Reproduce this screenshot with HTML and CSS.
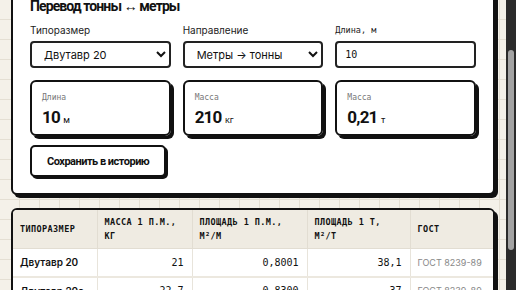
FILE: index.html
```html
<!DOCTYPE html>
<html lang="ru">
<head>
    <meta charset="UTF-8">
    <meta name="viewport" content="width=device-width, initial-scale=1.0">
    <title>Перевод тонны ↔ метры</title>
    <link rel="stylesheet" href="styles.css">
</head>
<body>
    <div class="page">
        <section class="card converter">
            <h2>Перевод тонны ↔ метры</h2>
            <div class="fields">
                <div class="field">
                    <label for="size">Типоразмер</label>
                    <select id="size">
                        <option>Двутавр 20</option>
                        <option>Двутавр 20а</option>
                        <option>Двутавр 22</option>
                    </select>
                </div>
                <div class="field">
                    <label for="direction">Направление</label>
                    <select id="direction">
                        <option>Метры → тонны</option>
                        <option>Тонны → метры</option>
                    </select>
                </div>
                <div class="field">
                    <label for="length" class="mono">Длина, м</label>
                    <input type="text" id="length" value="10">
                </div>
            </div>
            <div class="stats">
                <div class="stat">
                    <span class="stat-label">Длина</span>
                    <span class="stat-value">10 <small>м</small></span>
                </div>
                <div class="stat">
                    <span class="stat-label">Масса</span>
                    <span class="stat-value">210 <small>кг</small></span>
                </div>
                <div class="stat">
                    <span class="stat-label">Масса</span>
                    <span class="stat-value">0,21 <small>т</small></span>
                </div>
            </div>
            <button type="button">Сохранить в историю</button>
        </section>

        <section class="card table-card">
            <table>
                <colgroup>
                    <col class="c-name">
                    <col class="c-mass">
                    <col class="c-area">
                    <col class="c-area-t">
                    <col class="c-gost">
                </colgroup>
                <thead>
                    <tr>
                        <th>Типоразмер</th>
                        <th>Масса 1 п.м., кг</th>
                        <th>Площадь 1 п.м., м²/м</th>
                        <th>Площадь 1 т, м²/т</th>
                        <th>ГОСТ</th>
                    </tr>
                </thead>
                <tbody>
                    <tr>
                        <td class="name">Двутавр 20</td>
                        <td class="num">21</td>
                        <td class="num">0,8001</td>
                        <td class="num">38,1</td>
                        <td class="gost">ГОСТ 8239-89</td>
                    </tr>
                    <tr>
                        <td class="name">Двутавр 20а</td>
                        <td class="num">22,7</td>
                        <td class="num">0,8300</td>
                        <td class="num">37</td>
                        <td class="gost">ГОСТ 8239-89</td>
                    </tr>
                    <tr>
                        <td class="name">Двутавр 22</td>
                        <td class="num">24</td>
                        <td class="num">0,8750</td>
                        <td class="num">36,5</td>
                        <td class="gost">ГОСТ 8239-89</td>
                    </tr>
                </tbody>
            </table>
        </section>
    </div>

    <!-- полоса прокрутки страницы -->
    <div class="scrollbar"><div class="thumb"></div></div>

    <script src="script.js"></script>
</body>
</html>
```

FILE: styles.css
```css
* {
    margin: 0;
    padding: 0;
    box-sizing: border-box;
}

html {
    background-color: #f4f1e9;
    background-image:
        linear-gradient(#e4dfd3 1px, transparent 1px),
        linear-gradient(90deg, #e4dfd3 1px, transparent 1px);
    background-size: 20px 20px;
    background-position: -1px 11px;
}

body {
    font-family: Inter, 'Noto Sans', sans-serif;
    color: #111;
}

.page {
    padding: 54px 21px 12px 11px;
}

.scrollbar {
    position: fixed;
    top: 0;
    right: 0;
    width: 10px;
    height: 100%;
    background: #2b2b2b;
    padding: 50px 2px 0;
}

.thumb {
    height: 200px;
    background: #a3a3a3;
    border-radius: 3px;
}

.card {
    background: #fff;
    border: 2px solid #111;
    border-radius: 6px;
    box-shadow: 3px 3px 0 #111;
}

.converter {
    padding: 12px 17px 16px;
    margin-bottom: 13px;
}

h2,
.stat-value,
button {
    font-family: Roboto, 'Noto Sans', sans-serif;
    font-weight: 700;
}

h2 {
    font-size: 14px;
    letter-spacing: -0.9px;
    line-height: 20px;
    margin-bottom: 8px;
}

.fields {
    display: grid;
    grid-template-columns: repeat(3, 1fr);
    gap: 12px;
    margin-bottom: 12px;
}

.field label {
    display: block;
    font-size: 10px;
    line-height: 13px;
    color: #222;
    margin-bottom: 4px;
}

.field label.mono {
    font-family: 'DejaVu Sans Mono', monospace;
    font-size: 8.5px;
}

select,
input {
    width: 100%;
    height: 27px;
    border: 2px solid #222;
    border-radius: 4px;
    background: #fff;
    color: #111;
    padding: 0 8px;
    font-size: 11px;
    font-family: Inter, sans-serif;
}

input {
    font-family: 'DejaVu Sans Mono', monospace;
    font-size: 10px;
}

.stats {
    display: grid;
    grid-template-columns: repeat(3, 1fr);
    gap: 12px;
    margin-bottom: 9px;
}

.stat {
    height: 56px;
    border: 2px solid #111;
    border-radius: 6px;
    box-shadow: 3px 3px 0 #111;
    padding: 10px 10px 0;
    display: flex;
    flex-direction: column;
    gap: 3px;
}

.stat-label {
    font-family: 'DejaVu Sans Mono', monospace;
    font-size: 8px;
    line-height: 11px;
    color: #777;
}

.stat-value {
    font-size: 17px;
    letter-spacing: -0.8px;
    line-height: 22px;
}

.stat-value small {
    font-size: 9px;
    font-weight: 400;
    letter-spacing: 0;
}

button {
    height: 32px;
    padding: 0 15px;
    background: #fff;
    border: 2px solid #111;
    border-radius: 5px;
    box-shadow: 2px 2px 0 #111;
    font-size: 11px;
    letter-spacing: -0.5px;
    color: #111;
    cursor: pointer;
}

.table-card {
    overflow: hidden;
}

table {
    width: 100%;
    border-collapse: collapse;
    table-layout: fixed;
}

.c-name { width: 84px; }
.c-mass { width: 95px; }
.c-area { width: 115px; }
.c-area-t { width: 103px; }
.c-gost { width: 83px; }

th {
    background: #efebe2;
    text-align: left;
    font-family: 'DejaVu Sans Mono', monospace;
    font-size: 8.5px;
    letter-spacing: 0.4px;
    line-height: 14px;
    font-weight: 700;
    text-transform: uppercase;
    padding: 5px 7px;
    height: 38px;
    border-left: 1px solid #e2ddd2;
    border-bottom: 1px solid #e2ddd2;
}

th:first-child,
td:first-child {
    border-left: none;
}

td {
    height: 28px;
    padding: 0 7px;
    border-left: 1px solid #e8e4db;
    border-bottom: 2px solid #ece8df;
    white-space: nowrap;
}

td.name {
    font-weight: 600;
    font-size: 10px;
}

td.num {
    text-align: right;
    padding-right: 8px;
    font-family: 'DejaVu Sans Mono', monospace;
    font-size: 10px;
}

td.gost {
    color: #888;
    font-size: 9px;
}
```

FILE: script.js
```js
window.scrollTo(0, 72);
```
